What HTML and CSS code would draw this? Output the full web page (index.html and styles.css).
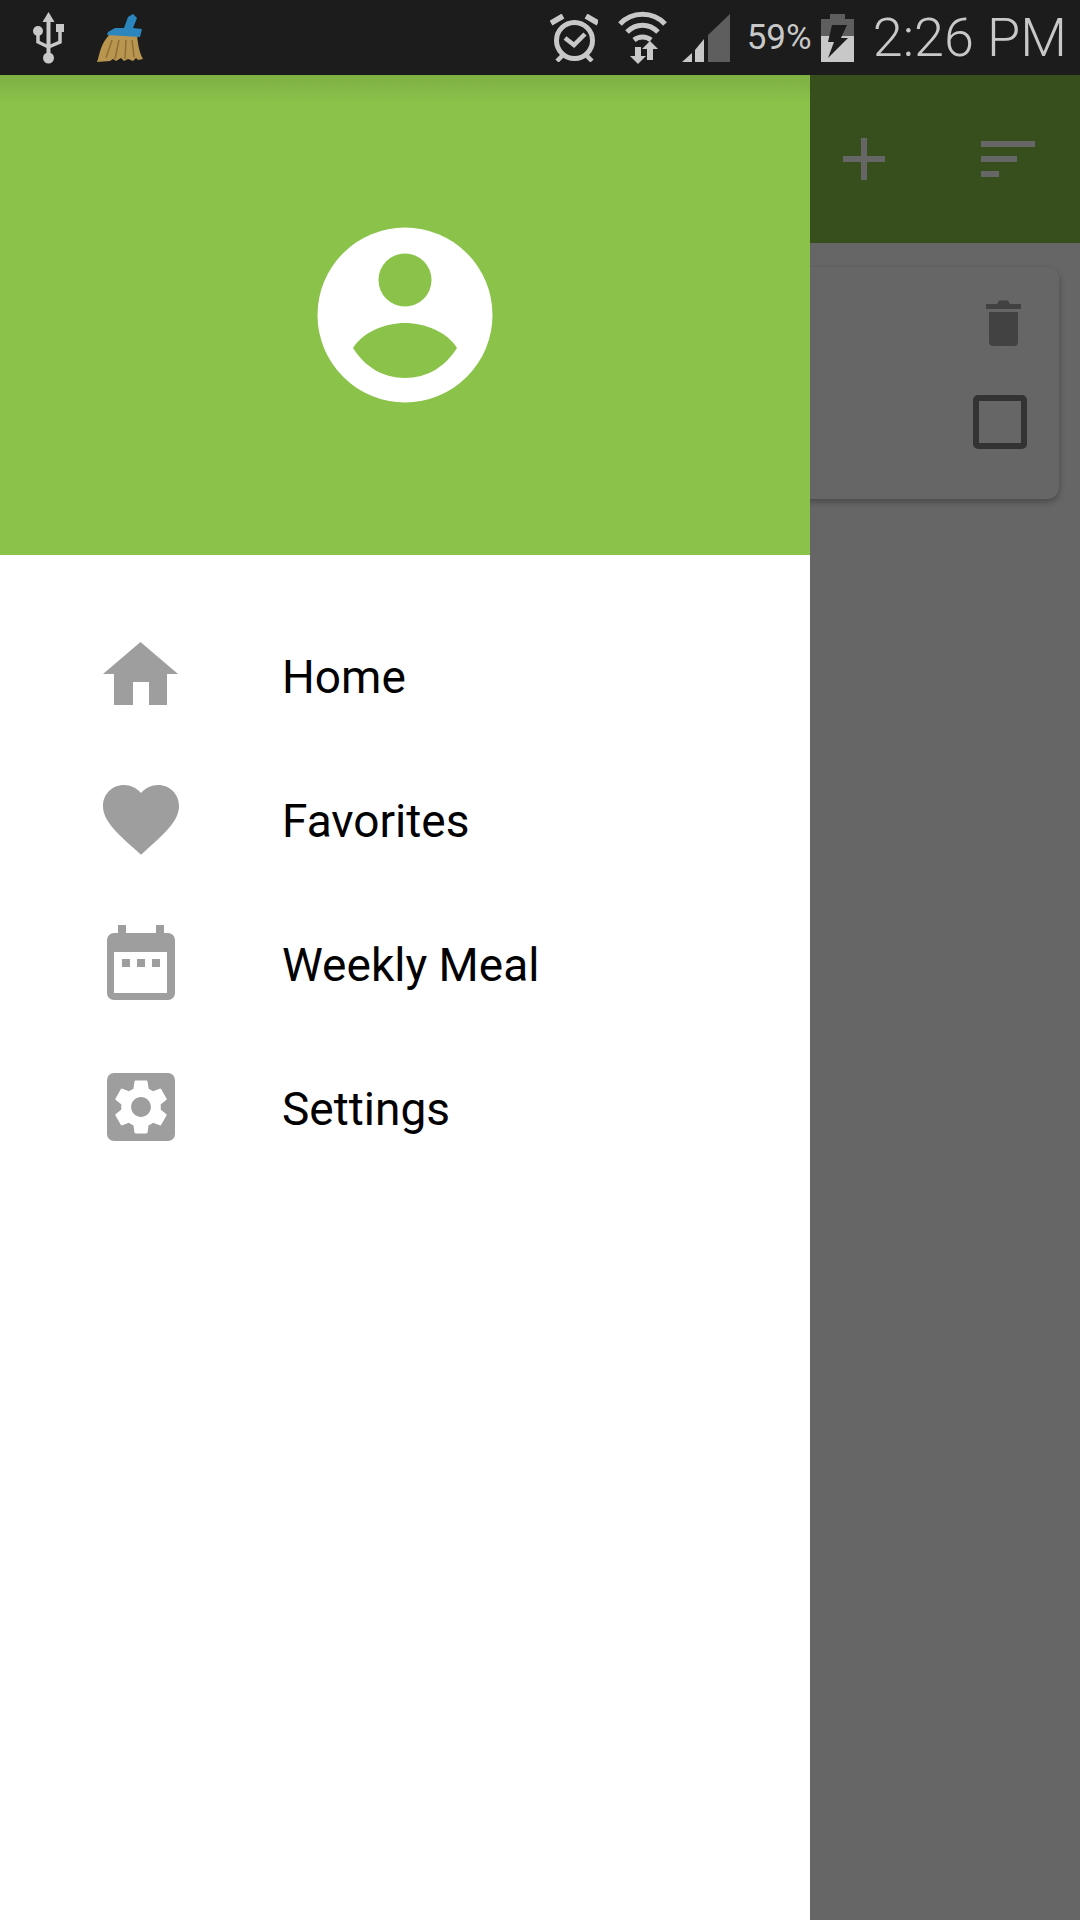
FILE: index.html
```html
<!DOCTYPE html>
<html lang="en">
<head>
    <meta charset="UTF-8">
    <meta name="viewport" content="width=device-width, initial-scale=1.0">
    <title>Recipes - Menu</title>
    <link rel="stylesheet" href="styles.css">
</head>
<body>
    <div class="status-bar">
        <svg class="usb" viewBox="0 0 31 52">
            <path d="M15.5 0l6 10h-4v32h-4V10h-4z" fill="#c8c8c8"/>
            <circle cx="15.5" cy="46" r="5.5" fill="#c8c8c8"/>
            <circle cx="5" cy="19" r="5" fill="#c8c8c8"/>
            <rect x="23" y="12" width="8" height="8" fill="#c8c8c8"/>
            <path d="M5 20v10l10.5 5M27 19v11l-11.5 5" fill="none" stroke="#c8c8c8" stroke-width="3.5"/>
        </svg>
        <svg class="broom" viewBox="0 0 46 48">
            <path d="M12 21h28c1 9 2 17 6 24l-5 1-2-2-3 3-5-2-4 2-3-3-5 3-3-2-3 2-13 1c3-8 3-17 12-27z" fill="#b8964f"/>
            <path d="M15 26l-6 18M22 26l-4 19M29 26l-1 19M35 26l2 17" stroke="#8f6f33" stroke-width="1.5" fill="none"/>
            <path d="M10 21l1-3 7-4h9l4-11 5-3 4 4-4 10 9 1-2 8z" fill="#2a86bd"/>
        </svg>
        <div class="status-right">
            <svg class="alarm" viewBox="0 0 48 48">
                <circle cx="24.5" cy="26.5" r="18" fill="none" stroke="#c8c8c8" stroke-width="5"/>
                <path d="M1 9l12-7M36 2l12 7" stroke="#c8c8c8" stroke-width="5.5"/>
                <path d="M15 24l9 7 11-11" fill="none" stroke="#c8c8c8" stroke-width="4.5"/>
                <path d="M12 42l-5 5M37 42l5 5" stroke="#c8c8c8" stroke-width="4.5"/>
            </svg>
            <svg class="wifi" viewBox="0 0 49 53">
                <path d="M2 13C14 0 35 0 47 13M9 21c9-9 22-9 31 0M16 29c5-4 12-4 17 0" fill="none" stroke="#c8c8c8" stroke-width="5"/>
                <path d="M17 36h6v9h5l-8 8-8-8h5z" fill="#c8c8c8"/>
                <path d="M32 30l8 8h-5v11h-6V38h-5z" fill="#c8c8c8"/>
            </svg>
            <svg class="signal" viewBox="0 0 48 48">
                <path d="M0 48l10-9v9z" fill="#c8c8c8"/>
                <path d="M13 36l9-11v23h-9z" fill="#c8c8c8"/>
                <path d="M26 21L48 0v48H26z" fill="#5e5e5e"/>
            </svg>
            <span class="battery-text">59%</span>
            <svg class="battery" viewBox="0 0 33 48">
                <path d="M9 0h15v5h9v17H0V5h9z" fill="#5e5e5e"/>
                <rect y="22" width="33" height="26" fill="#c8c8c8"/>
                <path d="M11 11h15l-6 13h7L7 44l6-16H7z" fill="#1c1c1c"/>
            </svg>
            <span class="clock">2:26 PM</span>
        </div>
    </div>

    <div class="screen">
        <div class="app-bar">
            <svg class="add" viewBox="0 0 42 42">
                <path d="M21 0v42M0 21h42" stroke="#fff" stroke-width="6"/>
            </svg>
            <svg class="sort" viewBox="0 0 54 36">
                <path d="M0 3h54M0 18h36M0 33h18" stroke="#fff" stroke-width="6"/>
            </svg>
        </div>
        <div class="card">
            <svg class="trash" viewBox="0 0 35 46">
                <path d="M0 4h11l2-3.5h9l2 3.5h11v5H0z" fill="#a6a6a6"/>
                <path d="M3 12h29v30a4 4 0 0 1-4 4H7a4 4 0 0 1-4-4z" fill="#a6a6a6"/>
            </svg>
            <div class="checkbox"></div>
        </div>

        <div class="scrim"></div>

        <div class="drawer">
            <div class="drawer-header">
                <svg class="avatar" viewBox="0 0 176 176">
                    <circle cx="88" cy="88" r="87.5" fill="#fff"/>
                    <circle cx="88" cy="53" r="26.5" fill="#8bc34a"/>
                    <path d="M36 121C46 105 68 96 88 96S130 105 140 121C128 140 110 151 88 151S48 140 36 121z" fill="#8bc34a"/>
                </svg>
            </div>
            <ul class="menu">
                <li class="menu-item">
                    <svg class="menu-icon" viewBox="0 0 80 80">
                        <path d="M40.5 5L78 37H67v31H49V45H33v23H14V37H3z" fill="#9e9e9e"/>
                    </svg>
                    <span>Home</span>
                </li>
                <li class="menu-item">
                    <svg class="menu-icon" viewBox="0 0 80 80">
                        <path transform="translate(-4.6 -7.4) scale(3.8)" d="M12 21.35l-1.45-1.32C5.4 15.36 2 12.28 2 8.5 2 5.42 4.42 3 7.5 3c1.74 0 3.41.81 4.5 2.09C13.09 3.81 14.76 3 16.5 3 19.58 3 22 5.42 22 8.5c0 3.78-3.4 6.86-8.55 11.54L12 21.35z" fill="#9e9e9e"/>
                    </svg>
                    <span>Favorites</span>
                </li>
                <li class="menu-item">
                    <svg class="menu-icon" viewBox="0 0 80 80">
                        <path fill-rule="evenodd" d="M18 0h8v8h30V0h8v8h4a7 7 0 0 1 7 7v53a7 7 0 0 1-7 7H14a7 7 0 0 1-7-7V15a7 7 0 0 1 7-7h4zM14 27v41h53V27z" fill="#9e9e9e"/>
                        <path d="M22 34h8v8h-8zM37 34h8v8h-8zM52 34h8v8h-8z" fill="#9e9e9e"/>
                    </svg>
                    <span>Weekly Meal</span>
                </li>
                <li class="menu-item">
                    <svg class="menu-icon" viewBox="0 0 80 80">
                        <rect x="7" y="4" width="68" height="68" rx="7" fill="#9e9e9e"/>
                        <path transform="translate(8 5) scale(2.75)" fill-rule="evenodd" d="M19.14 12.94c.04-.3.06-.61.06-.94 0-.32-.02-.64-.07-.94l2.03-1.58c.18-.14.23-.41.12-.61l-1.92-3.32c-.12-.22-.37-.29-.59-.22l-2.39.96c-.5-.38-1.03-.7-1.62-.94l-.36-2.54c-.04-.24-.24-.41-.48-.41h-3.84c-.24 0-.43.17-.47.41l-.36 2.54c-.59.24-1.13.57-1.62.94l-2.39-.96c-.22-.08-.47 0-.59.22L2.74 8.87c-.12.21-.08.47.12.61l2.03 1.58c-.05.3-.09.63-.09.94s.02.64.07.94l-2.03 1.58c-.18.14-.23.41-.12.61l1.92 3.32c.12.22.37.29.59.22l2.39-.96c.5.38 1.03.7 1.62.94l.36 2.54c.05.24.24.41.48.41h3.84c.24 0 .44-.17.47-.41l.36-2.54c.59-.24 1.13-.56 1.62-.94l2.39.96c.22.08.47 0 .59-.22l1.92-3.32c.12-.22.07-.47-.12-.61l-2.01-1.58zM12 15.6c-1.98 0-3.6-1.62-3.6-3.6s1.62-3.6 3.6-3.6 3.6 1.62 3.6 3.6-1.62 3.6-3.6 3.6z" fill="#fff"/>
                    </svg>
                    <span>Settings</span>
                </li>
            </ul>
        </div>
    </div>
</body>
</html>
```
FILE: styles.css
```css
* {
    box-sizing: border-box;
}

body {
    font-family: Roboto, 'Liberation Sans', sans-serif;
    margin: 0;
    width: 1080px;
    height: 1920px;
    overflow: hidden;
    background: #fff;
}

/* status bar */
.status-bar {
    display: flex;
    align-items: center;
    height: 75px;
    padding: 0 13px 0 33px;
    background: #1c1c1c;
    color: #c8c8c8;
}

.usb {
    width: 31px;
    height: 52px;
    margin-right: 33px;
}

.broom {
    width: 46px;
    height: 48px;
}

.status-right {
    display: flex;
    align-items: center;
    margin-left: auto;
}

.alarm { width: 48px; height: 48px; margin-right: 20px; }
.wifi { width: 49px; height: 53px; margin-right: 15px; }
.signal { width: 48px; height: 48px; margin-right: 17px; }
.battery { width: 33px; height: 48px; margin-right: 19px; }

.battery-text {
    font-size: 35px;
    margin-right: 9px;
}

.clock {
    font-size: 54px;
    font-weight: 300;
}

/* app behind the drawer */
.screen {
    position: relative;
    height: 1845px;
    background: #fff;
}

.app-bar {
    display: flex;
    justify-content: flex-end;
    align-items: center;
    height: 168px;
    padding: 0 45px 0 0;
    background: #8bc34a;
}

.add {
    width: 42px;
    height: 42px;
    margin-right: 96px;
}

.sort {
    width: 54px;
    height: 36px;
}

.card {
    display: flex;
    flex-direction: column;
    align-items: flex-end;
    height: 232px;
    margin: 24px 21px 0 0;
    padding: 33px 32px 0 0;
    background: #fff;
    border-radius: 12px;
    box-shadow: 0 3px 7px rgba(0, 0, 0, 0.3);
}

.trash {
    width: 35px;
    height: 46px;
    margin-right: 6px;
}

.checkbox {
    width: 54px;
    height: 54px;
    margin-top: 49px;
    border: 6px solid #808080;
    border-radius: 5px;
}

.scrim {
    position: absolute;
    inset: 0;
    background: rgba(0, 0, 0, 0.6);
}

/* drawer */
.drawer {
    position: absolute;
    top: 0;
    left: 0;
    bottom: 0;
    width: 810px;
    background: #fff;
}

.drawer-header {
    display: flex;
    justify-content: center;
    align-items: center;
    height: 480px;
    background: linear-gradient(#7fb043, #8bc34a 30px);
}

.avatar {
    width: 176px;
    height: 176px;
}

.menu {
    list-style: none;
    margin: 0;
    padding: 50px 0 0;
}

.menu-item {
    display: flex;
    align-items: center;
    height: 144px;
    padding-left: 100px;
    font-size: 46px;
    color: #000;
}

.menu-icon {
    width: 80px;
    height: 80px;
    margin-right: 102px;
    flex-shrink: 0;
}
```
